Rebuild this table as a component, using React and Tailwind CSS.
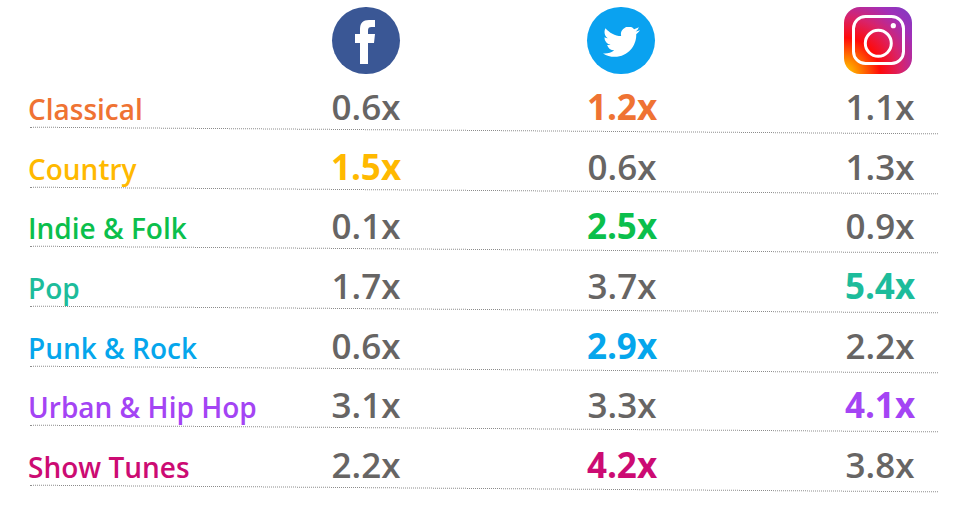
import React from "react";

const rows = [
  { label: "Classical", color: "#ef7333", vals: ["0.6x", "1.2x", "1.1x"], hi: 1 },
  { label: "Country", color: "#ffb900", vals: ["1.5x", "0.6x", "1.3x"], hi: 0 },
  { label: "Indie & Folk", color: "#0bbf4c", vals: ["0.1x", "2.5x", "0.9x"], hi: 1 },
  { label: "Pop", color: "#1dbc9b", vals: ["1.7x", "3.7x", "5.4x"], hi: 2 },
  { label: "Punk & Rock", color: "#05a6ec", vals: ["0.6x", "2.9x", "2.2x"], hi: 1 },
  { label: "Urban & Hip Hop", color: "#a444f4", vals: ["3.1x", "3.3x", "4.1x"], hi: 2 },
  { label: "Show Tunes", color: "#cc0b73", vals: ["2.2x", "4.2x", "3.8x"], hi: 1 },
];

const font = { fontFamily: '"Open Sans", "Noto Sans", sans-serif' };

function Facebook() {
  return (
    <div className="w-[68px] h-[67px] rounded-full bg-[#3a5795] shrink-0">
      <svg width="68" height="67" viewBox="0 0 68 67">
        <path
          d="M28 57 V36 H23 V27 H28 V22 C28 16 31 13 37 13 H43 V20 H39.5 C37 20 36 21 36 23.5 V27 H43 L42 36 H36 V57 Z"
          fill="#fff"
        />
      </svg>
    </div>
  );
}

function Twitter() {
  return (
    <div className="w-[68px] h-[67px] rounded-full bg-[#0aa2f0] shrink-0 flex items-center justify-center">
      <svg width="37" height="30" viewBox="0 2.5 24 19.3" className="mt-[2px]">
        <path
          fill="#fff"
          d="M23.953 4.57a10 10 0 01-2.825.775 4.958 4.958 0 002.163-2.723c-.951.555-2.005.959-3.127 1.184a4.92 4.92 0 00-8.384 4.482C7.69 8.095 4.067 6.13 1.64 3.162a4.822 4.822 0 00-.666 2.475c0 1.71.87 3.213 2.188 4.096a4.904 4.904 0 01-2.228-.616v.06a4.923 4.923 0 003.946 4.827 4.996 4.996 0 01-2.212.085 4.936 4.936 0 004.604 3.417 9.867 9.867 0 01-6.102 2.105c-.39 0-.779-.023-1.17-.067a13.995 13.995 0 007.557 2.209c9.053 0 13.998-7.496 13.998-13.985 0-.21 0-.42-.015-.63A9.935 9.935 0 0024 4.59z"
        />
      </svg>
    </div>
  );
}

function Instagram() {
  return (
    <svg width="68" height="67" viewBox="0 0 68 67" className="shrink-0">
      <defs>
        <radialGradient id="ig" cx="0" cy="67" r="95" gradientUnits="userSpaceOnUse">
          <stop offset="0" stopColor="#ffd600" />
          <stop offset="0.18" stopColor="#ff7a00" />
          <stop offset="0.38" stopColor="#ff0a0a" />
          <stop offset="0.6" stopColor="#d8236a" />
          <stop offset="0.8" stopColor="#a22fb8" />
          <stop offset="1" stopColor="#7b3cc4" />
        </radialGradient>
      </defs>
      <rect x="0" y="0" width="68" height="67" rx="16" fill="url(#ig)" />
      <rect x="9.5" y="9.5" width="50" height="47" rx="12" fill="none" stroke="#fff" strokeWidth="3" />
      <circle cx="34.3" cy="36.3" r="13" fill="none" stroke="#fff" strokeWidth="3" />
      <circle cx="49.3" cy="18.7" r="2.6" fill="#fff" />
    </svg>
  );
}

export default function App() {
  return (
    <div className="w-[964px] h-[516px] bg-white overflow-hidden" style={font}>
      <div className="ml-[30px] w-[908px] h-[74px] pt-[7px] flex">
        <div className="w-[302px] shrink-0" />
        <Facebook />
        <div className="w-[187px] shrink-0" />
        <Twitter />
        <div className="w-[189px] shrink-0" />
        <Instagram />
      </div>
      {rows.map((r, i) => (
        <div
          key={r.label}
          className={(i === 0 ? "pt-[15px]" : "pt-[17.7px]") + " ml-[30px] w-[908px]"}
        >
          <div className="flex items-baseline h-[35px]">
            <div className="w-[281px] shrink-0">
              <span
                className="-ml-[2px] text-[28px] leading-none font-semibold"
                style={{ color: r.color }}
              >
                {r.label}
              </span>
            </div>
            {r.vals.map((v, j) => (
              <div
                key={j}
                className={
                  (j === 1 ? "ml-[146px] " : j === 2 ? "ml-[148px] " : "") +
                  "w-[110px] shrink-0 text-center text-[35px] leading-[35px] " +
                  (j === r.hi ? "font-bold" : "font-semibold text-[#676564]")
                }
                style={j === r.hi ? { color: r.color } : undefined}
              >
                {v}
              </div>
            ))}
          </div>
          <div className="mt-[6px] h-0 border-t border-dotted border-[#8c8c8c] rotate-[0.42deg]" />
        </div>
      ))}
    </div>
  );
}
